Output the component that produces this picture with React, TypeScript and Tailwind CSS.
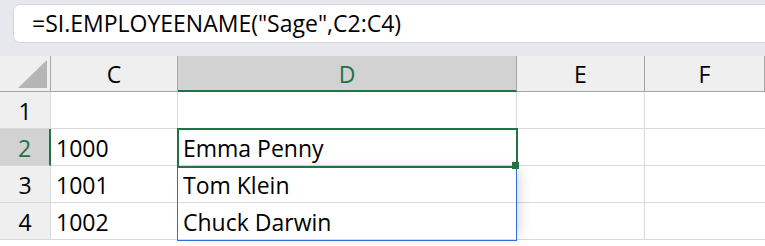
const cols = ["C", "D", "E", "F"];

const rows = [
  { n: "1", c: "", d: "" },
  { n: "2", c: "1000", d: "Emma Penny" },
  { n: "3", c: "1001", d: "Tom Klein" },
  { n: "4", c: "1002", d: "Chuck Darwin" },
];

function App() {
  return (
    <main
      className="w-[765px] h-[246px] overflow-hidden bg-white text-black"
      style={{ fontFamily: '"Open Sans", "Noto Sans", sans-serif' }}
    >
      {/* formula bar */}
      <div className="h-[56px] bg-[#e6e8ee] pt-[4px] pl-[13px]">
        <div className="h-[39px] -mr-3 rounded-[7px] border border-[#d3d5da] bg-white flex items-center pl-[18px] text-[23px] leading-none">
          =SI.EMPLOYEENAME("Sage",C2:C4)
        </div>
      </div>

      <div className="relative grid grid-cols-[51px_127px_339px_128px_1fr] text-[23px] leading-none">
        {/* header row */}
        <div className="h-[36px] bg-[#efefef] border-r border-b border-[#a6a6a6] flex items-end justify-end pr-[3px] pb-[3px]">
          <div className="w-[29px] h-[28px] bg-[#b5b5b5] [clip-path:polygon(100%_0,100%_100%,0_100%)]" />
        </div>
        {cols.map((c) => (
          <div
            key={c}
            className={
              c === "D"
                ? "h-[36px] pt-[2px] bg-[#d2d2d2] border-r border-[#a6a6a6] border-b-2 border-b-[#217346] text-[#217346] flex items-center justify-center"
                : "h-[36px] pt-[2px] bg-[#efefef] border-r border-b border-[#a6a6a6] flex items-center justify-center"
            }
          >
            {c}
          </div>
        ))}

        {/* body */}
        {rows.map((r) => (
          <div key={r.n} className="contents">
            <div
              className={
                r.n === "2"
                  ? "h-[37px] pt-[3px] bg-[#d2d2d2] text-[#217346] border-r-2 border-r-[#217346] border-b border-b-[#dadada] flex items-center justify-center"
                  : "h-[37px] pt-[3px] bg-[#efefef] border-r border-b border-[#dadada] flex items-center justify-center"
              }
            >
              {r.n}
            </div>
            <div className="h-[37px] pt-[3px] border-r border-b border-[#dadada] flex items-center pl-[5px]">{r.c}</div>
            <div className="h-[37px] pt-[3px] border-r border-b border-[#dadada] flex items-center pl-[5px]">{r.d}</div>
            <div className="h-[37px] border-r border-b border-[#dadada]" />
            <div className="h-[37px] border-b border-[#dadada]" />
          </div>
        ))}

        {/* spill range outline + shadow */}
        <div className="absolute left-[177px] top-[110px] w-[340px] h-[75px] border border-[#2f6fd6] shadow-[6px_0_12px_-4px_rgba(0,0,0,0.18)] pointer-events-none" />
        {/* active cell */}
        <div className="absolute left-[177px] top-[72px] w-[341px] h-[40px] border-2 border-[#217346] pointer-events-none" />
        {/* fill handle */}
        <div className="absolute left-[512px] top-[106px] w-[7px] h-[7px] bg-[#217346] pointer-events-none" />
      </div>
    </main>
  );
}

export default App;
